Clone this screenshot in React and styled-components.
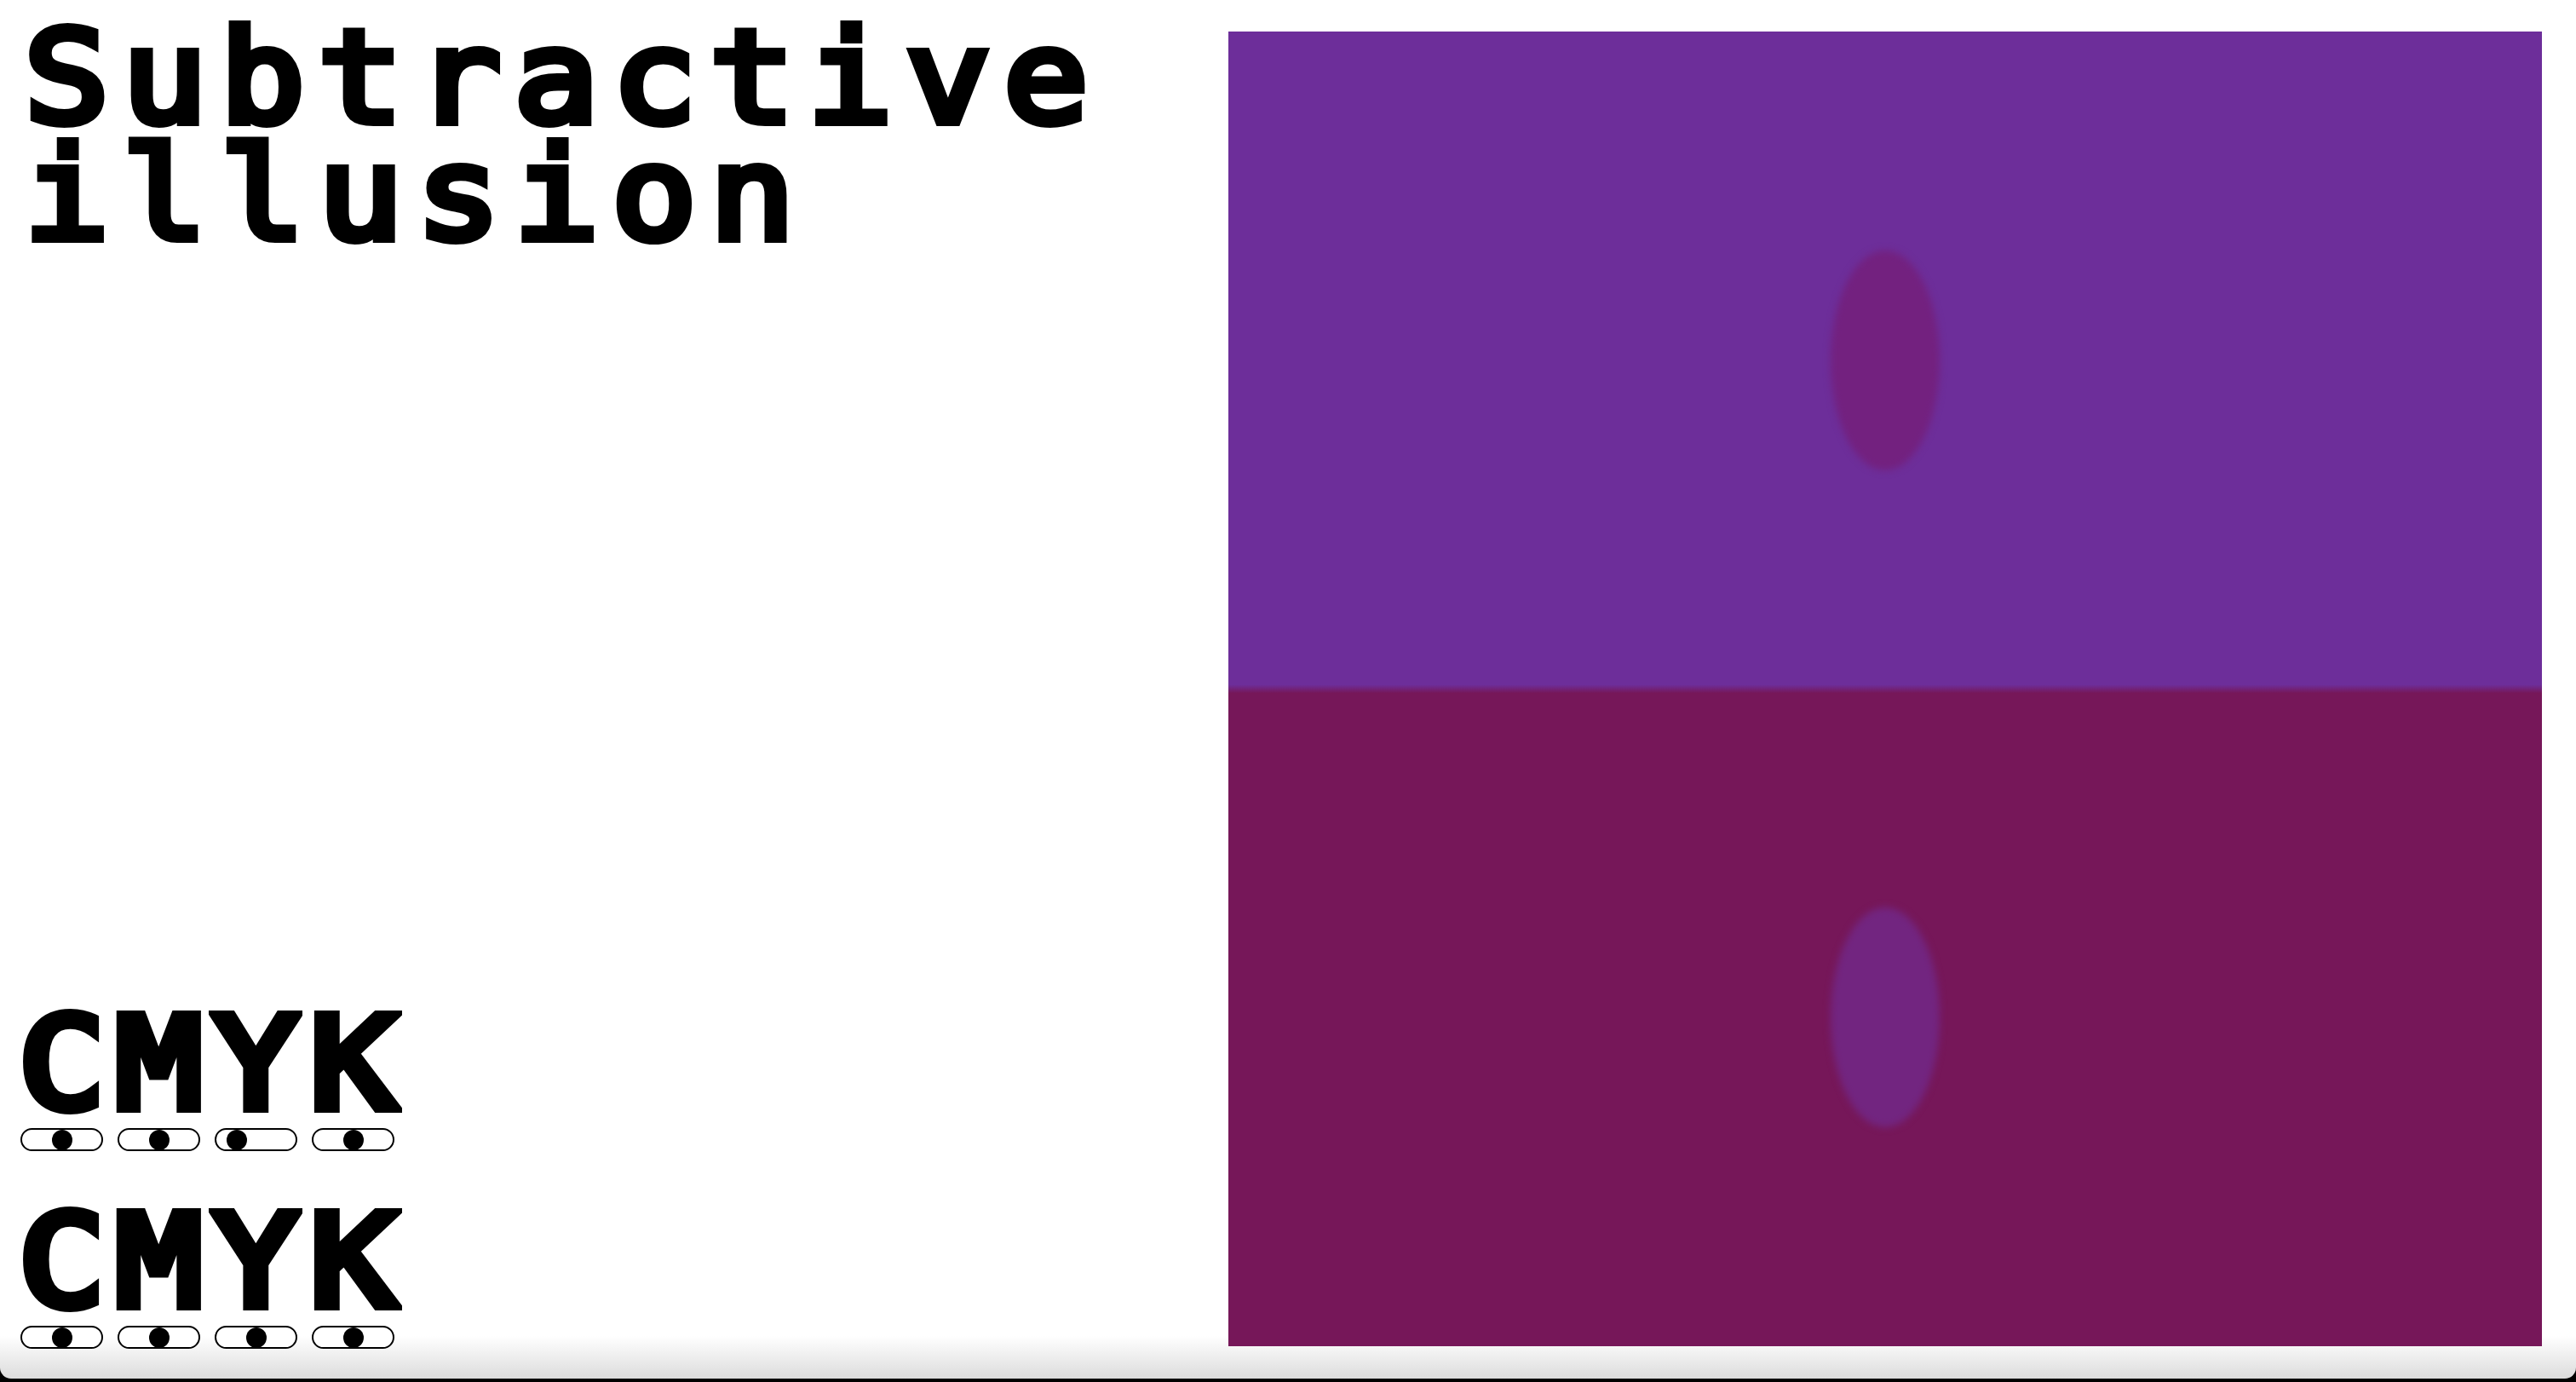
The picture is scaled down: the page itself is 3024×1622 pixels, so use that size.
import React from "react";
import styled, { createGlobalStyle } from "styled-components";

const GlobalStyle = createGlobalStyle`
  html, body {
    margin: 0;
    padding: 0;
    background: #000;
  }
  * { box-sizing: border-box; }
`;

const Window = styled.div`
  width: 3024px;
  height: 1618px;
  background: linear-gradient(to bottom, #ffffff 0, #ffffff calc(100% - 50px), #dcdcdc 100%);
  border-radius: 0 0 13px 13px;
  overflow: hidden;
  display: flex;
  justify-content: space-between;
  padding: 18px 40px 35px 0;
`;

const LeftColumn = styled.div`
  display: flex;
  flex-direction: column;
  justify-content: space-between;
`;

const Title = styled.h1`
  margin: 0;
  padding: 5px 0 0 26px;
  font-family: "DejaVu Sans Mono", "Liberation Mono", monospace;
  font-weight: 400;
  font-size: 150px;
  letter-spacing: 14.2px;
  line-height: 137px;
  color: #000;
  -webkit-text-stroke: 10px #000;
  transform: scaleX(1.1);
  transform-origin: 0 0;
`;

const Controls = styled.div`
  display: flex;
  flex-direction: column;
  gap: 65px;
  padding-left: 24px;
`;

const Group = styled.div`
  display: flex;
  flex-direction: column;
  gap: 10px;
`;

const Row = styled.div`
  display: grid;
  grid-template-columns: repeat(4, 97px);
  column-gap: 17px;
`;

const Letter = styled.span`
  display: block;
  text-align: center;
  font-family: "DejaVu Sans Mono", monospace;
  font-weight: 400;
  font-size: 148px;
  line-height: 130px;
  color: #000;
  -webkit-text-stroke: 12px #000;
  transform: scaleX(1.12);
`;

const Track = styled.div`
  position: relative;
  width: 97px;
  height: 27px;
  border: 2px solid #000;
  border-radius: 14px;
  background: #fff;
`;

const Knob = styled.div`
  position: absolute;
  top: 50%;
  width: 24px;
  height: 24px;
  border-radius: 50%;
  background: #000;
  transform: translate(-50%, -50%);
`;

const Panel = styled.div`
  position: relative;
  align-self: flex-end;
  margin-bottom: 3px;
  width: 1542px;
  height: 1543px;
  overflow: hidden;
  background: linear-gradient(
    to bottom,
    #6d2e9a 0,
    #6d2e9a calc(50% - 5px),
    #761759 calc(50% + 5px),
    #761759 100%
  );
`;

const Blob = styled.div`
  position: absolute;
  left: 50%;
  top: ${(p) => p.$top}%;
  width: 128px;
  height: 258px;
  border-radius: 50%;
  background: ${(p) => p.$color};
  filter: blur(4px);
  transform: translate(-50%, -50%);
`;

function Slider({ value }) {
  const inner = 93;
  const r = 12;
  const left = 2 + r + (value / 100) * (inner - 2 * r) - 2;
  return (
    <Track role="slider" aria-valuenow={value} aria-valuemin={0} aria-valuemax={100}>
      <Knob style={{ left: `${left}px` }} />
    </Track>
  );
}

const groups = [
  [50, 50, 18, 50],
  [50, 50, 50, 50],
];

export default function App() {
  return (
    <>
      <GlobalStyle />
      <Window>
        <LeftColumn>
          <Title>
            Subtractive
            <br />
            illusion
          </Title>
          <Controls>
            {groups.map((vals, gi) => (
              <Group key={gi}>
                <Row>
                  {["C", "M", "Y", "K"].map((l) => (
                    <Letter key={l}>{l}</Letter>
                  ))}
                </Row>
                <Row>
                  {vals.map((v, i) => (
                    <Slider key={i} value={v} />
                  ))}
                </Row>
              </Group>
            ))}
          </Controls>
        </LeftColumn>
        <Panel>
          <Blob $top={25} $color="#73217f" />
          <Blob $top={75} $color="#722580" />
        </Panel>
      </Window>
    </>
  );
}
